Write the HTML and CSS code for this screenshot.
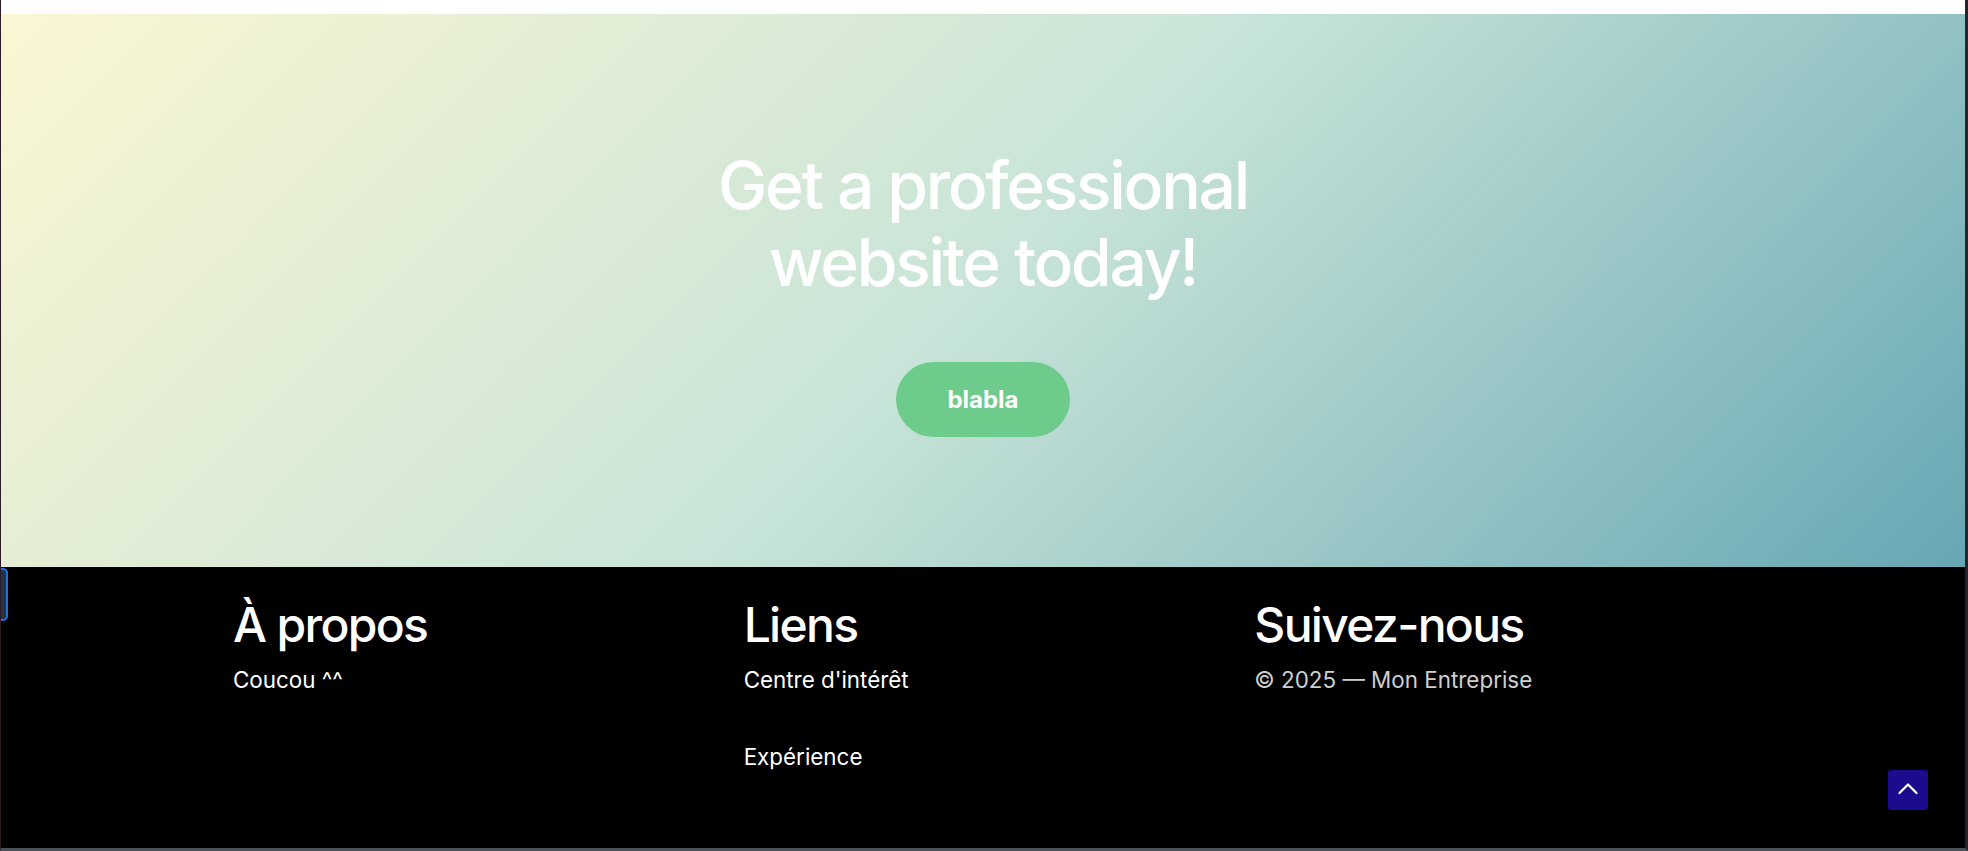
FILE: index.html
```html
<!DOCTYPE html>
<html lang="fr">
<head>
<meta charset="utf-8">
<title>Mon Entreprise</title>
<link rel="stylesheet" href="styles.css">
</head>
<body>
<div class="window">
  <div class="top-strip"></div>
  <section class="hero">
    <h2 class="hero-title">Get a professional website today!</h2>
    <a class="hero-btn" href="#">blabla</a>
  </section>
  <footer class="footer">
    <div class="footer-grid">
      <div class="footer-col">
        <h3 class="footer-title">À propos</h3>
        <p class="footer-text">Coucou ^^</p>
      </div>
      <div class="footer-col">
        <h3 class="footer-title">Liens</h3>
        <ul class="footer-links">
          <li><a href="#">Centre d'intérêt</a></li>
          <li><a href="#">Expérience</a></li>
        </ul>
      </div>
      <div class="footer-col">
        <h3 class="footer-title">Suivez-nous</h3>
        <p class="footer-copy">© 2025 — Mon Entreprise</p>
      </div>
    </div>
    <a class="to-top" href="#" aria-label="Haut de page">
      <svg width="40" height="40" viewBox="0 0 40 40" fill="none" stroke="#fff" stroke-width="2.2" stroke-linecap="round" stroke-linejoin="round"><path d="M11.5 23 L20 14.5 L28.5 23"/></svg>
    </a>
  </footer>
  <div class="side-tab"></div>
</div>
</body>
</html>
```

FILE: styles.css
```css
* { box-sizing: border-box; }
html, body { margin: 0; padding: 0; }
body {
  background: #fff;
  font-family: "Inter", "Liberation Sans", sans-serif;
}
.window {
  position: relative;
  height: 851px;
  display: flex;
  flex-direction: column;
  border-left: 1px solid #2b1b24;
  border-right: 3px solid #24262e;
  border-bottom: 3px solid #4a5257;
  overflow: hidden;
}
.top-strip {
  height: 14px;
  background: #fff;
  flex: none;
}
.hero {
  flex: none;
  height: 553px;
  display: flex;
  flex-direction: column;
  align-items: center;
  padding-top: 133px;
  background: linear-gradient(135deg, #fbf6d2 0%, #c8e4d8 50%, #66a6b3 100%);
}
.hero-title {
  margin: 0 0 61px;
  max-width: 620px;
  text-align: center;
  color: #fff;
  font-family: "Inter", "Liberation Sans", sans-serif;
  font-weight: 500;
  font-size: 66px;
  line-height: 77px;
  letter-spacing: -0.035em;
}
.hero-btn {
  display: inline-block;
  padding: 20px 51px;
  border-radius: 40px;
  background: #6dcb8b;
  color: #fff;
  font-weight: 700;
  font-size: 24px;
  line-height: 35px;
  text-decoration: none;
}
.footer {
  position: relative;
  flex: 1;
  background: #000;
  padding-top: 29px;
  color: #fff;
}
.footer-grid {
  max-width: 1500px;
  margin: 0 auto;
  display: grid;
  grid-template-columns: repeat(3, 1fr);
  gap: 32px;
}
.footer-title {
  margin: 0 0 10px;
  font-weight: 500;
  font-size: 48px;
  line-height: 57px;
  letter-spacing: -0.035em;
}
.footer-text {
  margin: 0;
  font-size: 22.4px;
  line-height: 33.6px;
}
.footer-links {
  list-style: none;
  margin: 6px 0 0;
  padding: 0;
  display: flex;
  flex-direction: column;
  gap: 43.4px;
}
.footer-links a {
  color: #fff;
  text-decoration: none;
  font-size: 22.4px;
  line-height: 33.6px;
}
.footer-copy {
  margin: 10px 0 0;
  font-size: 22.4px;
  line-height: 33.6px;
  color: #cfcfcf;
}
.to-top {
  position: absolute;
  right: 37px;
  bottom: 38px;
  width: 40px;
  height: 40px;
  border-radius: 3px;
  background: #1b0c8e;
  display: block;
}
.to-top svg { display: block; }
.side-tab {
  position: absolute;
  left: -1px;
  top: 568px;
  width: 8px;
  height: 53px;
  border: 2px solid #1a73e8;
  border-left: none;
  border-radius: 0 5px 5px 0;
  background: linear-gradient(180deg, #1d3350, #2a3340);
}
```
